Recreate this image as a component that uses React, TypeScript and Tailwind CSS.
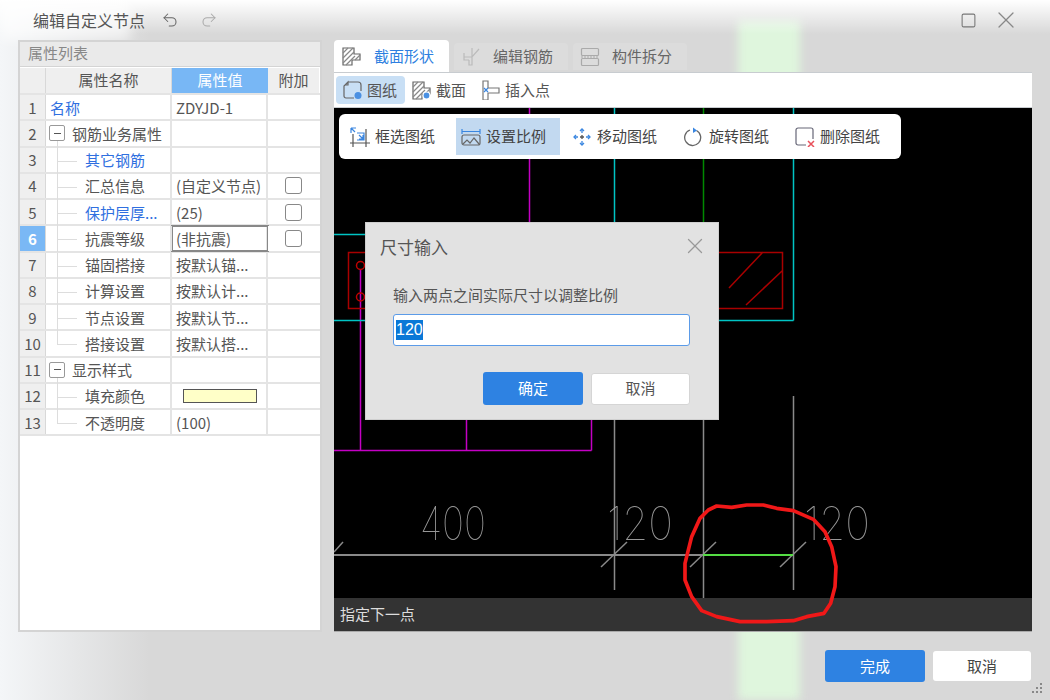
import React from "react";
import { Undo2, Redo2, Square, X } from "lucide-react";

const font = { fontFamily: '"Noto Sans CJK SC", "Liberation Sans", sans-serif' };

type Row = { n: number; name: string; value?: string; blue?: boolean; group?: boolean; check?: boolean; color?: boolean; last?: boolean; active?: boolean; tree?: boolean };

const rows: Row[] = [
  { n: 1, name: "名称", value: "ZDYJD-1", blue: true },
  { n: 2, name: "钢筋业务属性", group: true },
  { n: 3, name: "其它钢筋", blue: true, tree: true },
  { n: 4, name: "汇总信息", value: "(自定义节点)", check: true, tree: true },
  { n: 5, name: "保护层厚...", value: "(25)", blue: true, check: true, tree: true },
  { n: 6, name: "抗震等级", value: "(非抗震)", check: true, active: true, tree: true },
  { n: 7, name: "锚固搭接", value: "按默认锚...", tree: true },
  { n: 8, name: "计算设置", value: "按默认计...", tree: true },
  { n: 9, name: "节点设置", value: "按默认节...", tree: true },
  { n: 10, name: "搭接设置", value: "按默认搭...", tree: true, last: true },
  { n: 11, name: "显示样式", group: true },
  { n: 12, name: "填充颜色", color: true, tree: true },
  { n: 13, name: "不透明度", value: "(100)", tree: true, last: true },
];

function TableRow({ r }: { r: Row }) {
  return (
    <div className="flex h-[26.25px] shrink-0 border-b-2 border-[#e4e4e4] text-[15px] text-[#555] leading-none">
      <div className={`w-[26px] shrink-0 flex items-center justify-center border-r border-[#d8d8d8] text-[15px] ${r.active ? "bg-[#7ab8f5] text-white font-bold" : "bg-[#efefef] text-[#555]"}`}>{r.n}</div>
      <div className="relative w-[126px] shrink-0 flex items-center border-r-2 border-[#e4e4e4] bg-white">
        {r.group && (
          <>
            <span className="ml-[3px] w-[16px] h-[16px] border border-[#999] rounded-[2px] flex items-center justify-center bg-white relative z-10"><span className="w-[7px] h-px bg-[#555]" /></span>
            <span className="ml-[7px]">{r.name}</span>
            <span className="absolute left-[11px] top-[20px] h-[7px] border-l border-[#ddd]" />
          </>
        )}
        {r.tree && (
          <>
            <span className={`absolute left-[11px] top-0 border-l border-[#ddd] ${r.last ? "h-[13px]" : "h-[26px]"}`} />
            <span className="absolute left-[11px] top-[13px] w-[20px] border-t border-[#ddd]" />
            <span className={`ml-[39px] whitespace-nowrap ${r.blue ? "text-[#2f6fe0]" : ""}`}>{r.name}</span>
          </>
        )}
        {!r.group && !r.tree && <span className={`ml-[4px] ${r.blue ? "text-[#2f6fe0]" : ""}`}>{r.name}</span>}
      </div>
      <div className={`w-[96px] shrink-0 flex items-center border-r-2 border-[#e4e4e4] bg-white pl-[4px] whitespace-nowrap ${r.active ? "outline-2 -outline-offset-1 outline-[#888]" : ""}`}>
        {r.color ? <span className="ml-[7px] w-[74px] h-[14px] bg-[#ffffc8] border border-[#555]" /> : r.value}
      </div>
      <div className="w-[51px] shrink-0 flex items-center justify-center bg-white">
        {r.check && <span className="w-[17px] h-[17px] border border-[#888] rounded-[3px] bg-white" />}
      </div>
    </div>
  );
}

function PropertyPanel() {
  return (
    <div className="w-[304px] h-[592px] shrink-0 border-2 border-[#d4d4d4] bg-white flex flex-col">
      <div className="h-[25px] shrink-0 bg-[#eaeaea] border-b border-[#d4d4d4] pl-[8px] pb-[2px] flex items-center text-[15px] text-[#888]">属性列表</div>
      <div className="flex h-[27px] shrink-0 text-[15px] text-[#555] border-b-2 border-[#e4e4e4] mt-px">
        <div className="w-[26px] bg-[#efefef] border-r border-[#d8d8d8]" />
        <div className="w-[126px] bg-[#efefef] border-r border-[#d8d8d8] flex items-center justify-center">属性名称</div>
        <div className="w-[96px] bg-[#78b7f5] text-white flex items-center justify-center">属性值</div>
        <div className="w-[51px] bg-[#efefef] flex items-center justify-center">附加</div>
      </div>
      {rows.map((r) => <TableRow key={r.n} r={r} />)}
    </div>
  );
}

function HatchIcon({ dot }: { dot?: boolean }) {
  return (
    <svg width="20" height="20" viewBox="0 0 20 20" fill="none" stroke="#666" strokeWidth="1.2">
      <path d="M2 2h11v6h6v6h-8v5H2z" />
      <path d="M2 7l5-5M2 12l10-10M2 17l11-11M5 19l8-8M10 14l4-4M14 14l5-5" stroke="#888" />
      {dot && <circle cx="15.500" cy="15.500" r="3.500" fill="#4a90e2" stroke="#fff" />}
    </svg>
  );
}

function Tabs() {
  return (
    <div className="flex h-[32px] items-start">
      <div className="w-[115px] h-[32px] bg-white rounded-t-[4px] flex items-center text-[15px] text-[#2e7fe0] pl-[7px] gap-[13px]">
        <HatchIcon />
        <span>截面形状</span>
      </div>
      <div className="ml-[5px] mt-[3px] w-[114px] h-[27px] bg-[#dcdcdc] rounded-t-[4px] flex items-center text-[15px] text-[#666] pl-[8px] gap-[11px]">
        <svg width="20" height="20" viewBox="0 0 20 20" fill="none" stroke="#bbb" strokeWidth="1.2">
          <path d="M10 1v9M17 2l-7 8H2M2 6v7h5M10 10v8H7v-5" />
        </svg>
        <span>编辑钢筋</span>
      </div>
      <div className="ml-[5px] mt-[3px] w-[114px] h-[27px] bg-[#dcdcdc] rounded-t-[4px] flex items-center text-[15px] text-[#666] pl-[7px] gap-[12px]">
        <svg width="20" height="20" viewBox="0 0 20 20" fill="none" stroke="#aaa" strokeWidth="1.2">
          <rect x="1.500" y="1.500" width="17" height="7" rx="1" />
          <rect x="1.500" y="11.500" width="17" height="7" rx="1" />
          <path d="M1 10h18" strokeDasharray="2 1" />
        </svg>
        <span>构件拆分</span>
      </div>
    </div>
  );
}

function TopToolbar() {
  return (
    <div className="h-[36px] shrink-0 bg-white border-y border-[#c8ccd0] flex items-center pl-[2px] text-[15px] text-[#555]">
      <div className="w-[69px] h-[28px] bg-[#c8dff5] rounded-[4px] flex items-center pl-[7px] gap-[4px]">
        <svg width="20" height="20" viewBox="0 0 20 20" fill="none" stroke="#666" strokeWidth="1.2">
          <path d="M5 2h10a3 3 0 0 1 3 3v6M11 18H3a2 2 0 0 1-2-2V6l4-4v3H2" />
          <circle cx="15" cy="15.500" r="3.500" fill="#4a90e2" stroke="none" />
        </svg>
        <span>图纸</span>
      </div>
      <div className="ml-[6px] flex items-center gap-[5px]"><HatchIcon dot /><span>截面</span></div>
      <div className="ml-[15px] flex items-center gap-[4px]">
        <svg width="20" height="20" viewBox="0 0 20 20" fill="none" stroke="#777" strokeWidth="1.2">
          <path d="M2 1h5v7h11v5H7v7H2z" />
          <path d="M3 8l4 4M7 8l-4 4" stroke="#3a86e0" />
        </svg>
        <span>插入点</span>
      </div>
    </div>
  );
}

function FloatingToolbar() {
  const item = "flex items-center h-[37px] shrink-0 gap-[5px]";
  return (
    <div className="absolute left-[5px] top-[6px] w-[562px] h-[45px] bg-white rounded-[6px] flex items-center text-[15px] text-[#444]">
      <div className={`${item} w-[117px] pl-[11px]`}>
        <svg width="20" height="20" viewBox="0 0 20 20" fill="none" stroke="#555" strokeWidth="1.2">
          <path d="M0 16h20M3 7v13M16 2v18" />
          <path d="M1 1h5M1 1v5M1 1l4 4M7 6h7v7H7M13 12L9 8M13 8v4H9" stroke="#3a86e0" />
        </svg>
        <span>框选图纸</span>
      </div>
      <div className={`${item} w-[104px] bg-[#c2d9f0] pl-[5px]`}>
        <svg width="20" height="20" viewBox="0 0 20 20" fill="none" stroke="#666" strokeWidth="1.2">
          <path d="M1 2v5M19 2v5M1 4.500h18" stroke="#3a86e0" />
          <rect x="1" y="8" width="18" height="10" rx="2" />
          <path d="M2 17l4-4 3 3 4-5 5 6" />
        </svg>
        <span>设置比例</span>
      </div>
      <div className={`${item} ml-[12px]`}>
        <svg width="20" height="20" viewBox="0 0 20 20" fill="none" stroke="#3a86e0" strokeWidth="1.300">
          <path d="M10 2v4M10 14v4M2 10h4M14 10h4" />
          <path d="M10 8v4M8 10h4" stroke="#555" />
          <path d="M8 4l2-2 2 2M8 16l2 2 2-2M4 8l-2 2 2 2M16 8l2 2-2 2" />
        </svg>
        <span>移动图纸</span>
      </div>
      <div className={`${item} ml-[27px]`}>
        <svg width="20" height="20" viewBox="0 0 20 20" fill="none" stroke="#666" strokeWidth="1.300">
          <path d="M12.500 3.500A8 8 0 1 1 6 3" />
          <path d="M9 0.500l4 3-4 2.500z" fill="#3a86e0" stroke="none" />
        </svg>
        <span>旋转图纸</span>
      </div>
      <div className={`${item} ml-[26px]`}>
        <svg width="20" height="20" viewBox="0 0 20 20" fill="none" stroke="#667" strokeWidth="1.2">
          <path d="M11 18H3a2 2 0 0 1-2-2V3a2 2 0 0 1 2-2h13a2 2 0 0 1 2 2v9" />
          <path d="M13 14l6 6M19 14l-6 6" stroke="#e8505b" strokeWidth="1.500" />
        </svg>
        <span>删除图纸</span>
      </div>
    </div>
  );
}

function CadLines() {
  // coordinates are canvas-local (page x - 334, page y - 108)
  const ticks = [280, 369, 459];
  return (
    <svg className="absolute inset-0" width="698" height="490" viewBox="0 0 698 490" fill="none" strokeWidth="1.500">
      <path d="M195.500 0V114M26.500 162V342.500M132.500 312V342.500M257.500 312V342.500M0 342.500H257.500" stroke="#c400c4" />
      <path d="M280.500 0V114M459.500 0V212.500M0 126.500H32M384 212.500H459.500M0 212.500H32" stroke="#00c4c4" />
      <path d="M369.500 0V114" stroke="#008a00" />
      <path d="M32 144.500H14.500V200.500H32M384 144.500H448.500V200.500H384M429 144L395 180M448 163L412 197" stroke="#a80000" />
      <circle cx="26.500" cy="157.500" r="4" stroke="#c00000" />
      <circle cx="26.500" cy="189" r="4" stroke="#c00000" />
      <g stroke="#8a8a8a">
        {ticks.map((x) => <path key={x} d={`M${x - 13} 459L${x + 13} 434`} />)}
        <path d="M0 444L9 434" />
        <path d="M280.500 312V482M369.500 312V490M459.500 288V482" />
      </g>
      <path d="M0 447H369" stroke="#8a8a8a" strokeWidth="2" />
      <path d="M369 447H459" stroke="#55dd44" strokeWidth="2" />
    </svg>
  );
}

function CadDim({ text, x }: { text: string; x: number }) {
  return (
    <svg className="absolute top-[384px] opacity-95" style={{ left: x }} width="110" height="70" viewBox="0 0 110 70">
      <text x="0" y="48" fontFamily="Inter, sans-serif" fontWeight="100" fontSize="46" fill="#a0a0a0" textLength="66" lengthAdjust="spacingAndGlyphs">{text}</text>
    </svg>
  );
}

function SizeDialog() {
  return (
    <div className="absolute left-[31px] top-[114px] w-[354px] h-[198px] bg-[#e2e2e2] border border-[#cfcfcf] px-[27px] text-[#555]">
      <div className="absolute left-[14px] top-[11px] text-[17px]">尺寸输入</div>
      <X className="absolute left-[316px] top-[10px] text-[#999]" size={26} strokeWidth={1.2} />
      <div className="pt-[64px] text-[15px] leading-[16px] whitespace-nowrap">输入两点之间实际尺寸以调整比例</div>
      <div className="mt-[11px] h-[32px] w-[297px] bg-white border border-[#5b9be8] rounded-[3px] flex items-center pl-[2px] text-[16px]" style={{ fontFamily: '"Liberation Sans", sans-serif' }}>
        <span className="bg-[#0a78d7] text-white h-[20px] leading-[20px]">120</span>
      </div>
      <div className="mt-[26px] flex justify-end items-center gap-[8px] text-[15px] pr-px">
        <div className="w-[100px] h-[33px] bg-[#2e82e2] text-white rounded-[3px] flex items-center justify-center">确定</div>
        <div className="w-[99px] h-[32px] bg-white border border-[#d5d5d5] rounded-[3px] flex items-center justify-center">取消</div>
      </div>
    </div>
  );
}

function Canvas() {
  return (
    <div className="relative h-[490px] shrink-0 bg-black overflow-hidden">
      <CadLines />
      <CadDim text="400" x={86} />
      <CadDim text="120" x={273} />
      <CadDim text="120" x={470} />
      <FloatingToolbar />
      <SizeDialog />
    </div>
  );
}

export default function App() {
  return (
    <div className="relative w-[1050px] h-[700px] overflow-hidden bg-[#d8d8d8] flex flex-col" style={font}>
      {/* blurred desktop showing through the window */}
      <div className="absolute left-[738px] top-[20px] w-[62px] h-[680px] bg-[#dff6dd] blur-[5px]" />
      <div className="absolute left-0 top-0 w-[150px] h-[700px] bg-gradient-to-r from-[#f4f6f8] to-transparent" />
      <div className="absolute left-0 top-0 w-[1050px] h-[34px] bg-gradient-to-b from-[#ffffff] to-[#ffffff00]" />
      <div className="absolute left-0 top-0 w-[130px] h-[40px] bg-white/60 blur-[6px]" />

      {/* title bar */}
      <div className="relative h-[40px] shrink-0 flex items-center pl-[33px] pr-[30px] text-[#555]">
        <span className="text-[16px]">编辑自定义节点</span>
        <Undo2 className="ml-[16px] text-[#666]" size={18} strokeWidth={1.4} />
        <Redo2 className="ml-[21px] text-[#aaa]" size={18} strokeWidth={1.4} />
        <div className="ml-auto flex items-center gap-[15px]">
          <Square className="text-[#777]" size={17} strokeWidth={1.5} />
          <X className="text-[#888]" size={28} strokeWidth={1.1} />
        </div>
      </div>

      {/* body */}
      <div className="relative flex pl-[18px]">
        <PropertyPanel />
        <div className="ml-[12px] w-[698px] flex flex-col">
          <Tabs />
          <TopToolbar />
          <Canvas />
          <div className="h-[34px] bg-[#333] text-[#ddd] text-[15px] flex items-center pl-[6px] border-b border-[#aaa]">指定下一点</div>
        </div>
      </div>

      {/* footer */}
      <div className="relative flex justify-end items-center gap-[8px] pr-[19px] mt-[18px] text-[15px]">
        <div className="w-[100px] h-[32px] bg-[#2e82e2] text-white rounded-[3px] flex items-center justify-center">完成</div>
        <div className="w-[98px] h-[30px] bg-white rounded-[3px] flex items-center justify-center text-[#444]">取消</div>
      </div>
      <svg className="absolute right-[7px] bottom-[5px]" width="12" height="12" viewBox="0 0 12 12" fill="#888">
        <rect x="9" y="0" width="2" height="2" />
        <rect x="5" y="4" width="2" height="2" /><rect x="9" y="4" width="2" height="2" />
        <rect x="1" y="8" width="2" height="2" /><rect x="5" y="8" width="2" height="2" /><rect x="9" y="8" width="2" height="2" />
      </svg>

      {/* red marker annotation */}
      <svg className="absolute left-[650px] top-[440px]" width="400" height="260" viewBox="0 0 1200 780" fill="none">
        <path d="M200 198L245 202L290 195L340 195L380 205L430 212L490 238L525 275L545 320L558 380L555 440L542 490L522 520L470 530L430 542L350 545L270 545L200 530L155 512L125 470L105 420L105 370L125 290L150 235L175 210Z" stroke="#f01818" strokeWidth="11" strokeLinejoin="round" />
      </svg>
    </div>
  );
}
